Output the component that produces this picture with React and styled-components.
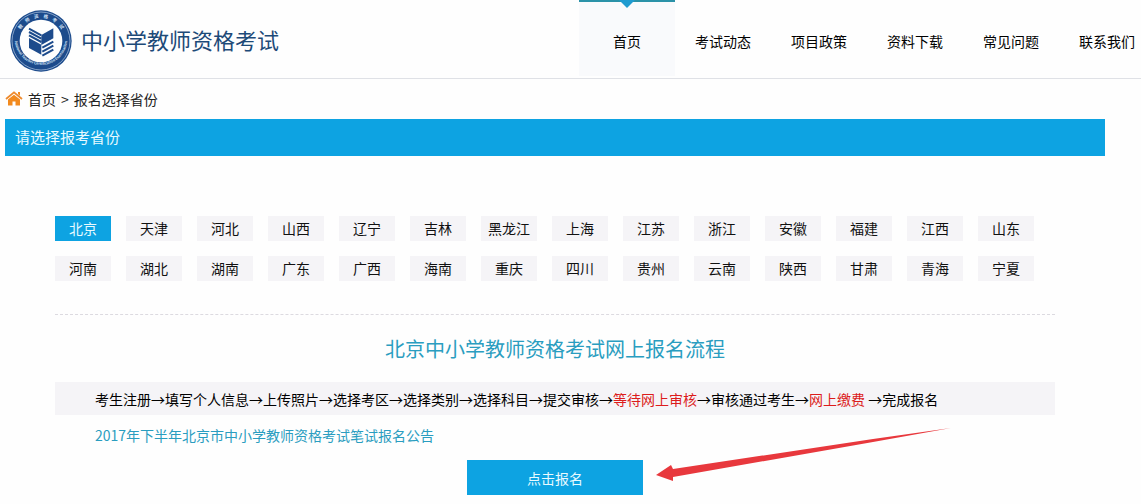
import React from 'react';
import styled, { createGlobalStyle, css, ThemeProvider } from 'styled-components';

const theme = {
  blue: '#0da3e2',
  navy: '#1c4b8c',
  teal: '#2a9dc0',
  gray: '#f5f4f7',
  red: '#dc1c1c',
  font: {
    s: '14px',
    m: '15px',
    l: '20px',
    xl: '22px',
  },
};

const GlobalStyle = createGlobalStyle`
  *, *::before, *::after {
    box-sizing: border-box;
  }
  body {
    margin: 0;
    background-color: #fefefe;
    color: #111;
    font-family: 'Noto Sans CJK SC', 'Noto Sans', sans-serif;
    font-size: ${theme.font.s};
    line-height: 20px;
  }
  a {
    color: inherit;
    text-decoration: none;
  }
`;

const Header = styled.header`
  display: flex;
  justify-content: space-between;
  padding-left: 10px;
  border-bottom: 1px solid #dfe1e6;
  overflow: hidden;
`;
const Brand = styled.a`
  display: flex;
  align-items: center;
  gap: 9px;
  padding-top: 3px;
  white-space: nowrap;
`;
const BrandName = styled.span`
  padding-bottom: 4px;
  color: #1d4a78;
  font-size: ${({ theme }) => theme.font.xl};
`;
const Nav = styled.nav`
  display: flex;
  flex-shrink: 0;
  margin-right: -14px;
  padding-bottom: 2px;
`;
const NavLink = styled.a`
  position: relative;
  width: 96px;
  height: 76px;
  padding-top: 29px;
  border-top: 2px solid transparent;
  color: #000;
  text-align: center;
  ${({ $active }) =>
    $active &&
    css`
      border-top-color: #2b92a8;
      background-color: #f9fafc;
      &::after {
        content: '';
        position: absolute;
        top: -2px;
        left: 50%;
        border: 8px solid transparent;
        border-top-color: #1f9bd0;
        border-bottom: 0;
        transform: translateX(-50%);
      }
    `}
`;

const Breadcrumb = styled.nav`
  display: flex;
  align-items: center;
  gap: 5px;
  height: 40px;
  padding: 0 5px;
  color: #222;
`;
const HomeIcon = styled.svg`
  flex-shrink: 0;
  margin-bottom: 2px;
`;

const Main = styled.main`
  margin: 0 36px 0 5px;
`;
const SectionTitle = styled.h1`
  margin: 0;
  padding: 8px 10px 9px;
  background-color: ${({ theme }) => theme.blue};
  color: #e8faff;
  font-size: ${({ theme }) => theme.font.m};
  font-weight: 400;
`;
const Content = styled.div`
  padding: 60px 50px 0;
`;
const Provinces = styled.div`
  display: flex;
  flex-wrap: wrap;
  gap: 15px;
  padding-bottom: 33px;
  border-bottom: 1px dashed #dcdae0;
`;
const Province = styled.button`
  width: 56px;
  height: 25px;
  padding: 0 0 2px;
  border: 0;
  background-color: ${({ theme, $active }) => ($active ? theme.blue : theme.gray)};
  color: ${({ $active }) => ($active ? '#e8faff' : '#111')};
  font: inherit;
  cursor: pointer;
`;

const FlowTitle = styled.h2`
  margin: 0;
  padding: 19px 0 18px;
  color: ${({ theme }) => theme.teal};
  font-size: ${({ theme }) => theme.font.l};
  font-weight: 400;
  line-height: 30px;
  text-align: center;
`;
const Flow = styled.p`
  margin: 0;
  padding: 7px 40px 6px;
  background-color: ${({ theme }) => theme.gray};
  color: #000;
`;
const Highlight = styled.span`
  color: ${({ theme }) => theme.red};
`;
const Notice = styled.a`
  display: block;
  padding: 10px 40px 15px;
  && {
    color: ${({ theme }) => theme.teal};
  }
`;
const Action = styled.div`
  position: relative;
  width: 176px;
  margin: 0 auto;
`;
const SubmitButton = styled.button`
  width: 100%;
  height: 35px;
  padding: 0;
  border: 0;
  background-color: ${({ theme }) => theme.blue};
  color: #e8faff;
  font: inherit;
  cursor: pointer;
`;
const Pointer = styled.svg`
  position: absolute;
  top: -32px;
  left: calc(100% + 13px);
`;

const LogoText = styled.text`
  fill: #cfe0f5;
  font-size: ${({ $small }) => ($small ? '11px' : '14px')};
  font-weight: 700;
  white-space: pre;
`;

const navItems = ['首页', '考试动态', '项目政策', '资料下载', '常见问题', '联系我们'];

const provinces = [
  '北京', '天津', '河北', '山西', '辽宁', '吉林', '黑龙江',
  '上海', '江苏', '浙江', '安徽', '福建', '江西', '山东',
  '河南', '湖北', '湖南', '广东', '广西', '海南', '重庆',
  '四川', '贵州', '云南', '陕西', '甘肃', '青海', '宁夏',
];

const Logo = () => (
  <svg width="62" height="62" viewBox="0 0 186 186" aria-hidden="true">
    <defs>
      <path id="ring-top" d="M23 93a70 70 0 0 1 140 0" />
      <path id="ring-bottom" d="M14 86a79 79 0 1 0 158 0" />
    </defs>
    <circle cx="93" cy="93" r="92" fill={theme.navy} />
    <circle cx="93" cy="93" r="87" fill="none" stroke="#b9cde6" strokeWidth="2" />
    <circle cx="93" cy="93" r="64" fill="#fdfefe" />
    <LogoText textAnchor="middle">
      <textPath href="#ring-top" startOffset="50%">{'教师资格考试'.split('').join('    ')}</textPath>
    </LogoText>
    <LogoText $small textAnchor="middle">
      <textPath href="#ring-bottom" startOffset="50%">National Teacher Certification Examination</textPath>
    </LogoText>
    <g fill={theme.navy}>
      <path d="M94 75l36-20v30L94 105z" />
      <path d="M57 84l37 20v30L57 114z" />
    </g>
    <g fill="none" stroke={theme.navy} strokeWidth="6">
      <path d="M57 56l37 20M57 66l37 20M57 76l37 20" />
      <path d="M97 113l33-18M97 125l33-18M97 137l33-18" />
    </g>
  </svg>
);

const App = () => (
  <ThemeProvider theme={theme}>
    <GlobalStyle />
    <Header>
      <Brand href="#">
        <Logo />
        <BrandName>中小学教师资格考试</BrandName>
      </Brand>
      <Nav>
        {navItems.map((item, index) => (
          <NavLink key={item} href="#" $active={index === 0}>
            {item}
          </NavLink>
        ))}
      </Nav>
    </Header>
    <Breadcrumb>
      <HomeIcon width="18" height="15" viewBox="0 0 18 15" aria-hidden="true">
        <path d="M1 8l8-6.600 8 6.600" fill="none" stroke="#ee8a2c" strokeWidth="1.800" />
        <path d="M13 1h2v4l-2-2z" fill="#f28a1e" />
        <path d="M3 8.500L9 3.800l6 4.700V14.500h-4.500v-4h-3v4H3z" fill="#f28a1e" />
      </HomeIcon>
      <a href="#">首页</a>
      <span>&gt;</span>
      <span>报名选择省份</span>
    </Breadcrumb>
    <Main>
      <SectionTitle>请选择报考省份</SectionTitle>
      <Content>
        <Provinces>
          {provinces.map((name, index) => (
            <Province key={name} type="button" $active={index === 0}>
              {name}
            </Province>
          ))}
        </Provinces>
        <FlowTitle>北京中小学教师资格考试网上报名流程</FlowTitle>
        <Flow>
          考生注册→填写个人信息→上传照片→选择考区→选择类别→选择科目→提交审核→
          <Highlight>等待网上审核</Highlight>→审核通过考生→<Highlight>网上缴费</Highlight> →完成报名
        </Flow>
        <Notice href="#">2017年下半年北京市中小学教师资格考试笔试报名公告</Notice>
        <Action>
          <SubmitButton type="button">点击报名</SubmitButton>
          <Pointer width="296" height="54" viewBox="0 0 296 54" aria-hidden="true">
            <path d="M0 47L15 37l2 4L217 11 295 0 217 14 17 49v4z" fill="#e8383d" />
          </Pointer>
        </Action>
      </Content>
    </Main>
  </ThemeProvider>
);

export default App;
